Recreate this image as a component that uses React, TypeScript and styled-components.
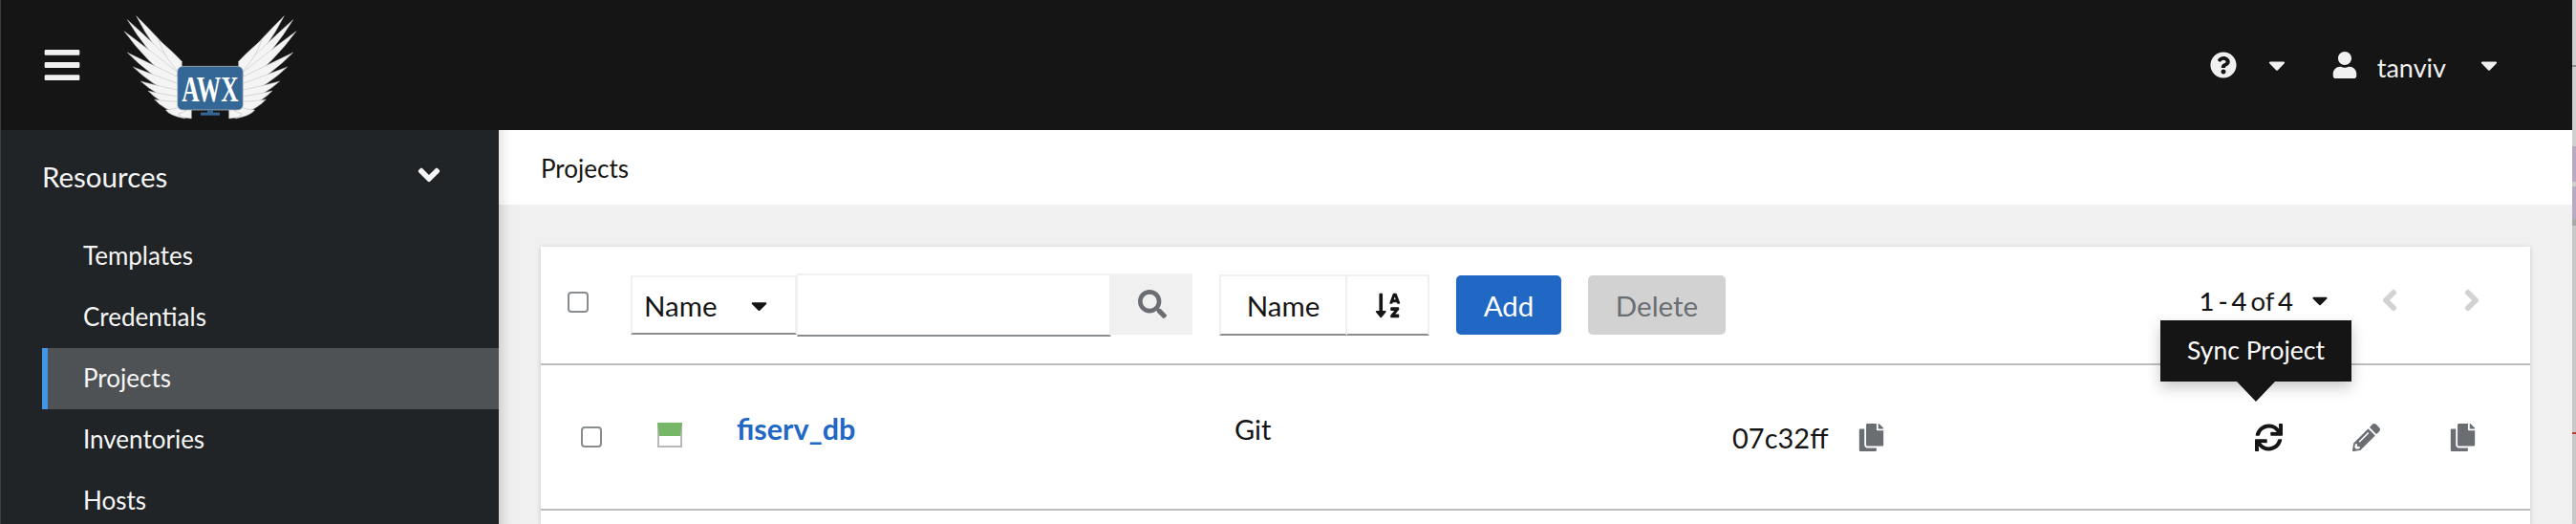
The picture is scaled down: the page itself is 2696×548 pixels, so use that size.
import React from 'react'
import styled, { createGlobalStyle } from 'styled-components'
import {
  FaAngleDown, FaAngleLeft, FaAngleRight, FaBars, FaCaretDown, FaCopy, FaPencilAlt,
  FaQuestionCircle, FaSearch, FaSortAlphaDown, FaSync, FaUser,
} from 'react-icons/fa'

const GlobalStyle = createGlobalStyle`
  html, body {
    margin: 0;
    width: 2696px;
    height: 548px;
    overflow: hidden;
    background: #f0f0f0;
    font-family: "Lato", "Liberation Sans", sans-serif;
    color: #151515;
  }
  * { box-sizing: border-box; }
`

const Screen = styled.div`
  display: flex;
  width: 2696px;
  height: 548px;
`

const App_ = styled.div`
  flex: 1;
  display: flex;
  flex-direction: column;
  min-width: 0;
  border-left: 1px solid #3c3f42;
`

const EdgeStrip = styled.div`
  width: 4px;
  background: linear-gradient(
    to bottom,
    #cfcfcf 0 68px, #8f8f8f 68px 70px, #cfcfcf 70px 153px,
    #b7aac2 153px 190px, #cfcfcf 190px 195px, #b7aac2 195px 229px,
    #a9a9a9 229px 236px, #c9c9c9 236px 452px, #c0392b 452px 454px, #c9c9c9 454px
  );
`

const Header = styled.header`
  height: 136px;
  background: #151515;
  display: flex;
  align-items: center;
  color: #f0f0f0;
  flex: none;
`

const Burger = styled.div`
  display: flex;
  margin-left: 43px;
  font-size: 42px;
  color: #f0f0f0;
`

const LogoWrap = styled.div`
  display: flex;
  margin-left: 34px;
`

const HeaderRight = styled.div`
  margin-left: auto;
  display: flex;
  align-items: center;
  padding-right: 73px;
`

const HeaderIcon = styled.span<{ $size: number; $left: number }>`
  display: flex;
  font-size: ${p => p.$size}px;
  margin-left: ${p => p.$left}px;
`

const UserName = styled.span`
  font-size: 27px;
  margin-left: 20px;
  position: relative;
  top: 2px;
`

const Body = styled.div`
  flex: 1;
  display: flex;
  min-height: 0;
`

const Sidebar = styled.nav`
  width: 521px;
  flex: none;
  background: #212427;
  color: #f6f6f6;
  overflow: hidden;
`

const GroupTitle = styled.div`
  height: 100px;
  display: flex;
  align-items: center;
  justify-content: space-between;
  padding: 0 55px 4px 43px;
  font-size: 29.5px;
  svg { font-size: 36px; margin-bottom: 2px; }
`

const NavItem = styled.div<{ $active?: boolean }>`
  height: 64px;
  margin-left: 43px;
  display: flex;
  align-items: center;
  padding-left: ${p => (p.$active ? 37 : 43)}px;
  padding-bottom: 2px;
  font-size: 26px;
  flex: none;
  ${p => p.$active && 'background: #4f5255; border-left: 6px solid #4394e5;'}
`

const Content = styled.main`
  flex: 1;
  min-width: 0;
  display: flex;
  flex-direction: column;
  box-shadow: inset 14px 0 12px -10px rgba(0, 0, 0, 0.16);
`

const Breadcrumb = styled.div`
  height: 78px;
  flex: none;
  background: #fff;
  display: flex;
  align-items: center;
  padding: 2px 0 0 44px;
  font-size: 26px;
  box-shadow: inset 14px 0 12px -10px rgba(0, 0, 0, 0.12);
`

const Card = styled.section`
  position: relative;
  margin: 44px 44px 0 44px;
  background: #fff;
  flex: 1;
  box-shadow: 0 1px 5px rgba(3, 3, 3, 0.18);
`

const Toolbar = styled.div`
  height: 124px;
  display: flex;
  align-items: center;
  padding: 0 43px 0 28px;
  border-bottom: 2px solid #bdbdbd;
`

const CheckBox = styled.span`
  display: block;
  width: 22px;
  height: 22px;
  flex: none;
  background: #fff;
  border: 2px solid #8a8d90;
  border-radius: 4px;
`

const ToolbarCheck = styled(CheckBox)`
  margin: -6px 44px 0 0;
`

const NameSelect = styled.div`
  width: 174px;
  height: 62px;
  display: flex;
  align-items: center;
  justify-content: space-between;
  padding: 0 24px 0 12px;
  font-size: 29.5px;
  border: 2px solid #f0f0f0;
  border-bottom-color: #8a8d90;
  svg { font-size: 27px; }
`

const SearchInput = styled.div`
  width: 329px;
  height: 66px;
  border: 2px solid #f0f0f0;
  border-bottom-color: #8a8d90;
  border-left-width: 1px;
`

const SearchButton = styled.div`
  width: 85px;
  height: 64px;
  margin-top: -2px;
  background: #f0f0f0;
  display: flex;
  align-items: center;
  justify-content: center;
  color: #6a6e73;
  font-size: 30px;
`

const SortName = styled.div`
  width: 134px;
  height: 64px;
  margin-left: 28px;
  display: flex;
  align-items: center;
  justify-content: center;
  font-size: 29.5px;
  border: 2px solid #f0f0f0;
  border-bottom-color: #8a8d90;
`

const SortIcon = styled(SortName)`
  width: 86px;
  margin-left: 0;
  border-left: 0;
  font-size: 29px;
`

const Button = styled.button<{ $width: number; $disabled?: boolean }>`
  width: ${p => p.$width}px;
  height: 62px;
  margin-left: 28px;
  border: 0;
  padding: 0;
  border-radius: 5px;
  font-family: inherit;
  font-size: 29.5px;
  background: ${p => (p.$disabled ? '#d2d2d2' : '#2168c4')};
  color: ${p => (p.$disabled ? '#6a6e73' : '#fff')};
`

const Pagination = styled.div`
  margin-left: auto;
  margin-top: -10px;
  display: flex;
  align-items: center;
  font-size: 27.5px;
  word-spacing: -3px;
`

const PageCount = styled.span`
  b { font-weight: 500; }
`

const PageCaret = styled.span`
  display: flex;
  font-size: 26px;
  margin-left: 15px;
`

const PageArrow = styled.span<{ $left: number }>`
  display: flex;
  font-size: 36px;
  color: #d2d2d2;
  margin-left: ${p => p.$left}px;
`

const Row = styled.div`
  height: 152px;
  display: grid;
  grid-template-columns: 42px 22px 58px 26px 57px 521px 521px 1fr;
  align-items: center;
  border-bottom: 2px solid #bdbdbd;
`

const StatusIcon = styled.span`
  display: block;
  width: 26px;
  height: 26px;
  border: 2px solid #b8b8b8;
  border-top: 14px solid #76b767;
  margin-top: -4px;
`

const ProjectName = styled.a`
  color: #2168c4;
  font-weight: 700;
  font-size: 30.5px;
  padding-bottom: 18px;
  grid-column: 6;
`

const TypeCell = styled.span`
  font-size: 29px;
  padding-bottom: 18px;
`

const RevisionCell = styled.div`
  display: flex;
  align-items: center;
  font-size: 29px;
`

const RowIcon = styled.span<{ $left: number; $dark?: boolean }>`
  display: flex;
  font-size: 29px;
  color: ${p => (p.$dark ? '#151515' : '#6a6e73')};
  margin-left: ${p => p.$left}px;
`

const Tooltip = styled.div`
  position: absolute;
  left: 1695px;
  top: 77px;
  width: 200px;
  height: 64px;
  background: #151515;
  color: #fff;
  display: flex;
  align-items: center;
  justify-content: center;
  padding-bottom: 2px;
  font-size: 26.5px;
  box-shadow: 0 6px 14px rgba(3, 3, 3, 0.22);

  &::after {
    content: '';
    position: absolute;
    left: 80px;
    top: 64px;
    border: 20px solid transparent;
    border-bottom: 0;
    border-top: 21px solid #151515;
  }
`

const feathers: [number, number, number, number][] = [
  [68, 50, 195, 215],
  [40, 62, 190, 232],
  [30, 98, 190, 248],
  [138, 125, 205, 215],
  [40, 165, 195, 265],
  [58, 210, 195, 285],
  [82, 255, 198, 305],
  [105, 285, 200, 325],
  [125, 312, 205, 340],
  [160, 345, 215, 350],
  [200, 357, 235, 350],
]

const featherPath = ([tx, ty, bx, by]: [number, number, number, number]) => {
  const mx = (tx + bx) / 2
  const my = (ty + by) / 2
  return `M${tx} ${ty} Q${mx + 14} ${my - 6} ${bx + 6} ${by - 22} L${bx + 6} ${by + 22} Q${mx - 14} ${my + 16} ${tx} ${ty}Z`
}

const Wing = () => (
  <g fill="#f4f4f4" stroke="#b9b9b9" strokeWidth="1.5">
    {feathers.map(f => (
      <path key={f[0] + '-' + f[1]} d={featherPath(f)} />
    ))}
  </g>
)

// AWX wings and monitor, coordinates follow the 3x crop of the logo
const Logo = () => (
  <svg width="200" height="136" viewBox="0 0 600 408">
    <Wing />
    <g transform="translate(600 0) scale(-1 1)">
      <Wing />
    </g>
    <rect x="197" y="208" width="206" height="137" rx="16" fill="#356796" stroke="#c9c9c9" strokeWidth="2" />
    <rect x="291" y="345" width="18" height="9" fill="#356796" />
    <rect x="270" y="353" width="60" height="9" fill="#356796" />
    <text
      x="300"
      y="318"
      textAnchor="middle"
      textLength="178"
      lengthAdjust="spacingAndGlyphs"
      fontFamily="'Liberation Serif', serif"
      fontWeight="700"
      fontSize="116"
      fill="#fff"
    >
      AWX
    </text>
  </svg>
)

export default function App() {
  return (
    <>
      <GlobalStyle />
      <Screen>
        <App_>
          <Header>
            <Burger><FaBars /></Burger>
            <LogoWrap><Logo /></LogoWrap>
            <HeaderRight>
              <HeaderIcon $size={28} $left={0}><FaQuestionCircle /></HeaderIcon>
              <HeaderIcon $size={28} $left={28}><FaCaretDown /></HeaderIcon>
              <HeaderIcon $size={28} $left={43}><FaUser /></HeaderIcon>
              <UserName>tanviv</UserName>
              <HeaderIcon $size={28} $left={31}><FaCaretDown /></HeaderIcon>
            </HeaderRight>
          </Header>
          <Body>
            <Sidebar>
              <GroupTitle>Resources <FaAngleDown /></GroupTitle>
              <NavItem>Templates</NavItem>
              <NavItem>Credentials</NavItem>
              <NavItem $active>Projects</NavItem>
              <NavItem>Inventories</NavItem>
              <NavItem>Hosts</NavItem>
            </Sidebar>
            <Content>
              <Breadcrumb>Projects</Breadcrumb>
              <Card>
                <Toolbar>
                  <ToolbarCheck />
                  <NameSelect>Name <FaCaretDown /></NameSelect>
                  <SearchInput />
                  <SearchButton><FaSearch /></SearchButton>
                  <SortName>Name</SortName>
                  <SortIcon><FaSortAlphaDown /></SortIcon>
                  <Button $width={110}>Add</Button>
                  <Button $width={144} $disabled>Delete</Button>
                  <Pagination>
                    <PageCount><b>1 - 4</b> of <b>4</b></PageCount>
                    <PageCaret><FaCaretDown /></PageCaret>
                    <PageArrow $left={42}><FaAngleLeft /></PageArrow>
                    <PageArrow $left={50}><FaAngleRight /></PageArrow>
                  </Pagination>
                </Toolbar>
                <Row>
                  <span />
                  <CheckBox />
                  <span />
                  <StatusIcon />
                  <span />
                  <ProjectName>fiserv_db</ProjectName>
                  <TypeCell>Git</TypeCell>
                  <RevisionCell>
                    07c32ff
                    <RowIcon $left={31}><FaCopy /></RowIcon>
                    <RowIcon $left={387} $dark><FaSync /></RowIcon>
                    <RowIcon $left={73}><FaPencilAlt /></RowIcon>
                    <RowIcon $left={72}><FaCopy /></RowIcon>
                  </RevisionCell>
                </Row>
                <Tooltip>Sync Project</Tooltip>
              </Card>
            </Content>
          </Body>
        </App_>
        <EdgeStrip />
      </Screen>
    </>
  )
}
